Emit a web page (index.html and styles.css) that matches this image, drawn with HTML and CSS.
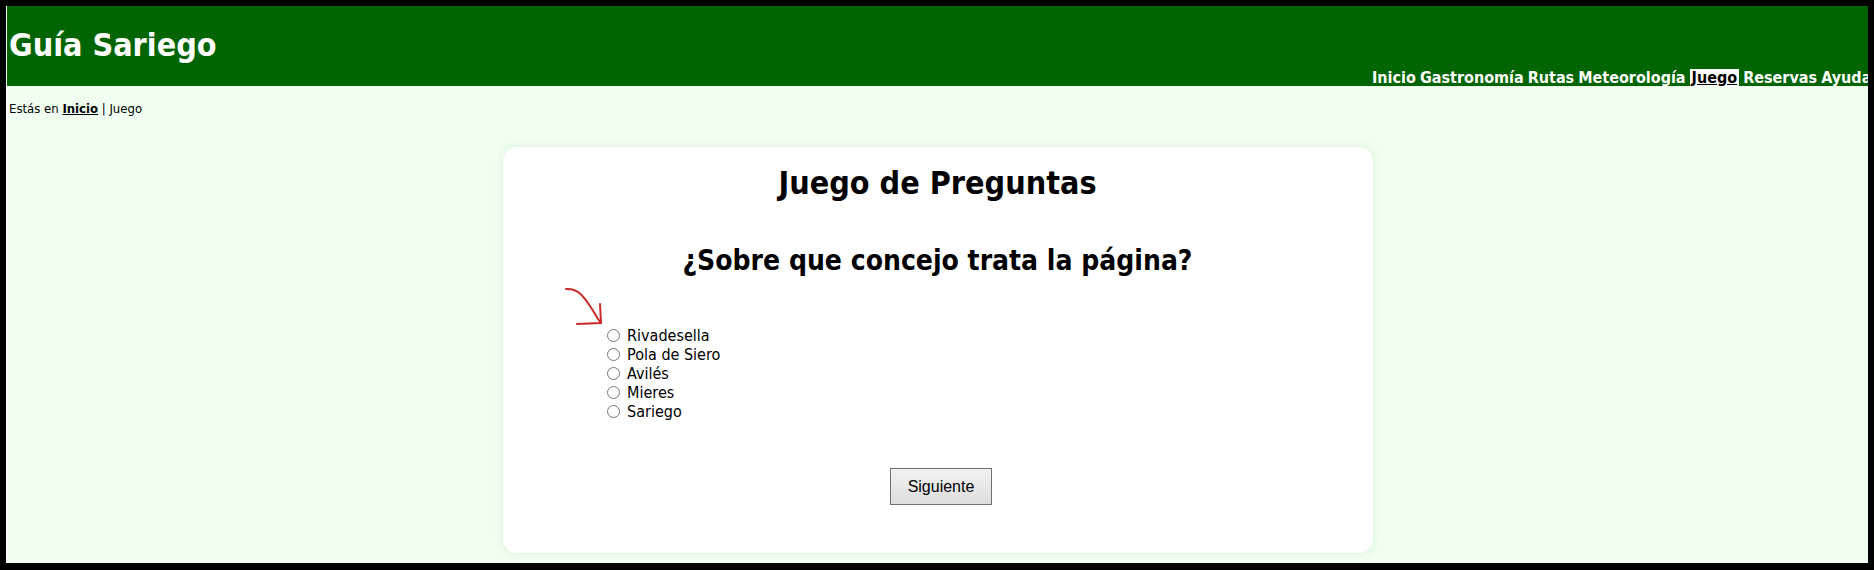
FILE: index.html
```html
<!DOCTYPE html>
<html lang="es">
<head>
<meta charset="utf-8">
<title>Guía Sariego - Juego</title>
<link rel="stylesheet" href="styles.css">
</head>
<body>
<div class="frame">
  <header class="header">
    <h1 class="site-title">Guía Sariego</h1>
    <nav class="nav">
      <a href="#">Inicio</a> <a href="#">Gastronomía</a> <a href="#">Rutas</a> <a href="#">Meteorología</a> <a href="#" class="current">Juego</a> <a href="#">Reservas</a> <a href="#">Ayuda</a>
    </nav>
  </header>
  <p class="breadcrumb">Estás en <a href="#">Inicio</a> | Juego</p>
  <main class="card">
    <h2 class="card-title">Juego de Preguntas</h2>
    <h3 class="question">¿Sobre que concejo trata la página?</h3>
    <form class="quiz">
      <div class="options">
        <svg class="arrow" width="44" height="40" viewBox="0 0 44 40">
          <path d="M2 2 C 14 1, 20 10, 26 19 S 34 33, 37 36" fill="none" stroke="#c92a2a" stroke-width="2" stroke-linecap="round"/>
          <path d="M13 37 L 37 36 L 36 17" fill="none" stroke="#c92a2a" stroke-width="2" stroke-linecap="round" stroke-linejoin="round"/>
        </svg>
        <label class="option"><input type="radio" name="r"> Rivadesella</label>
        <label class="option"><input type="radio" name="r"> Pola de Siero</label>
        <label class="option"><input type="radio" name="r"> Avilés</label>
        <label class="option"><input type="radio" name="r"> Mieres</label>
        <label class="option"><input type="radio" name="r"> Sariego</label>
      </div>
      <div class="actions">
        <button type="button" class="btn">Siguiente</button>
      </div>
    </form>
  </main>
</div>
</body>
</html>
```
FILE: styles.css
```css
html, body {
  margin: 0;
  padding: 0;
  background: #000;
  height: 100%;
}
body {
  padding: 6px 6px 7px 6px;
  box-sizing: border-box;
}
.frame {
  height: 100%;
  background: #f0fff0;
  border-left: 1px solid #ffffff;
  overflow: hidden;
  font-family: "DejaVu Sans Condensed", "DejaVu Sans", sans-serif;
  display: flex;
  flex-direction: column;
}
.header {
  background: #006400;
  color: #fff;
  padding: 21px 0 0 2px;
  display: flex;
  flex-direction: column;
  height: 80px;
  box-sizing: border-box;
}
.site-title {
  margin: 0;
  font-size: 32px;
  font-weight: bold;
  line-height: 37px;
}
.nav {
  margin-top: auto;
  margin-bottom: -1px;
  line-height: 18px;
  font-size: 16px;
  font-weight: bold;
  white-space: nowrap;
  word-spacing: -1px;
  padding-left: 1363px;
}
.nav a {
  color: #fff;
  text-decoration: none;
}
.nav a.current {
  background: #fff;
  color: #000;
  text-decoration: underline;
  display: inline-block;
  padding: 0 2px;
}
.breadcrumb {
  margin: 15px 0 0 2px;
  font-size: 13px;
  line-height: 15px;
  color: #000;
}
.breadcrumb a {
  color: #000;
  font-weight: bold;
}
.card {
  width: 870px;
  box-sizing: border-box;
  margin: 31px auto 0;
  background: #fff;
  border-radius: 14px;
  box-shadow: 0 0 8px rgba(0, 100, 0, 0.10);
  padding: 18px 0 48px;
}
.card-title {
  margin: 0;
  text-align: center;
  font-size: 32px;
  line-height: 37px;
  font-weight: bold;
}
.question {
  margin: 42px 0 0;
  text-align: center;
  font-size: 28px;
  line-height: 33px;
  font-weight: bold;
}
.options {
  margin: 49px 0 0 99px;
  display: flex;
  flex-direction: column;
  position: relative;
}
.arrow {
  position: absolute;
  left: -38px;
  top: -39px;
}
.option {
  font-size: 16px;
  line-height: 19px;
  height: 19px;
}
.option input {
  margin: 3px 3px 0 5px;
  vertical-align: -1px;
}
.actions {
  margin-top: 47px;
  display: flex;
  justify-content: center;
}
.btn {
  margin-left: 7px;
  font-family: "Liberation Sans", Arial, sans-serif;
  font-size: 16px;
  line-height: 19px;
  padding: 8px 17px;
  border: 1px solid #707070;
  border-radius: 0;
  background: linear-gradient(#f2f2f2, #dddddd);
  color: #000;
}
```
